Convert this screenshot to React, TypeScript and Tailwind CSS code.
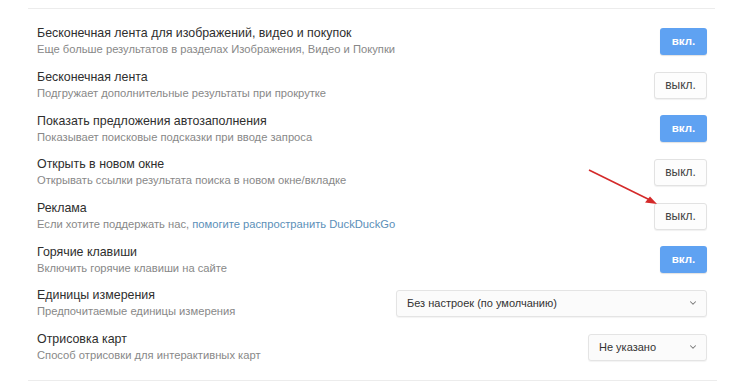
import { ChevronDown } from 'lucide-react';

type Row = {
  title: string;
  sub: React.ReactNode;
  control: 'on' | 'off' | 'units' | 'maps';
};

const rows: Row[] = [
  {
    title: 'Бесконечная лента для изображений, видео и покупок',
    sub: 'Еще больше результатов в разделах Изображения, Видео и Покупки',
    control: 'on',
  },
  {
    title: 'Бесконечная лента',
    sub: 'Подгружает дополнительные результаты при прокрутке',
    control: 'off',
  },
  {
    title: 'Показать предложения автозаполнения',
    sub: 'Показывает поисковые подсказки при вводе запроса',
    control: 'on',
  },
  {
    title: 'Открыть в новом окне',
    sub: 'Открывать ссылки результата поиска в новом окне/вкладке',
    control: 'off',
  },
  {
    title: 'Реклама',
    sub: (
      <>
        Если хотите поддержать нас,{' '}
        <span className="text-[#5b8fb8]">помогите распространить DuckDuckGo</span>
      </>
    ),
    control: 'off',
  },
  {
    title: 'Горячие клавиши',
    sub: 'Включить горячие клавиши на сайте',
    control: 'on',
  },
  {
    title: 'Единицы измерения',
    sub: 'Предпочитаемые единицы измерения',
    control: 'units',
  },
  {
    title: 'Отрисовка карт',
    sub: 'Способ отрисовки для интерактивных карт',
    control: 'maps',
  },
];

const Control = ({ kind }: { kind: Row['control'] }) => {
  if (kind === 'on')
    return (
      <button className="h-[27px] w-[47px] rounded-[3px] bg-[#5fa2f2] text-[11.5px] font-bold text-white shadow-[0_1px_1px_rgba(0,0,0,0.12)]">
        вкл.
      </button>
    );
  if (kind === 'off')
    return (
      <button className="h-[27px] w-[53px] rounded-[3px] border border-[#e2e2e2] bg-[#fdfdfd] text-[12px] text-[#444] shadow-[0_1px_1px_rgba(0,0,0,0.06)]">
        выкл.
      </button>
    );
  const wide = kind === 'units';
  return (
    <div
      className={
        (wide ? 'w-[311px]' : 'w-[119px]') +
        ' flex h-[27px] items-center justify-between rounded-[3px] border border-[#e4e4e4] bg-[#fbfbfb] pl-[10px] pr-[8px] text-[11px] text-[#333] shadow-[0_1px_1px_rgba(0,0,0,0.05)]'
      }>
      <span>{wide ? 'Без настроек (по умолчанию)' : 'Не указано'}</span>
      <ChevronDown className="h-[10px] w-[10px] text-[#777]" strokeWidth={2.5} />
    </div>
  );
};

export default function App() {
  return (
    <div
      className="relative h-[385px] w-[730px] bg-white"
      style={{ fontFamily: '"Liberation Sans", Arial, sans-serif' }}>
      <div className="pt-[8px]">
        <div className="ml-[28px] w-[687px] border-t border-[#ececec] pb-[11px] pt-[10.5px]">
          {rows.map((row, i) => (
            <div
              key={i}
              className="flex h-[43.7px] items-center justify-between pl-[9px] pr-[8px]">
              <div className="flex flex-col">
                <div className="text-[12.4px] leading-[16px] text-[#2e2e2e]">{row.title}</div>
                <div className="text-[11.2px] leading-[16px] text-[#888]">{row.sub}</div>
              </div>
              <Control kind={row.control} />
            </div>
          ))}
        </div>
        <div className="ml-[28px] w-[689px] border-t border-[#ececec]" />
      </div>

      <svg
        className="pointer-events-none absolute left-0 top-0"
        width="730"
        height="385"
        viewBox="0 0 730 385">
        <line x1="589" y1="170" x2="652" y2="201" stroke="#d42a2a" strokeWidth="1.6" />
        <path d="M657 204 L645 202.5 L650 196.5 Z" fill="#d42a2a" />
      </svg>
    </div>
  );
}
